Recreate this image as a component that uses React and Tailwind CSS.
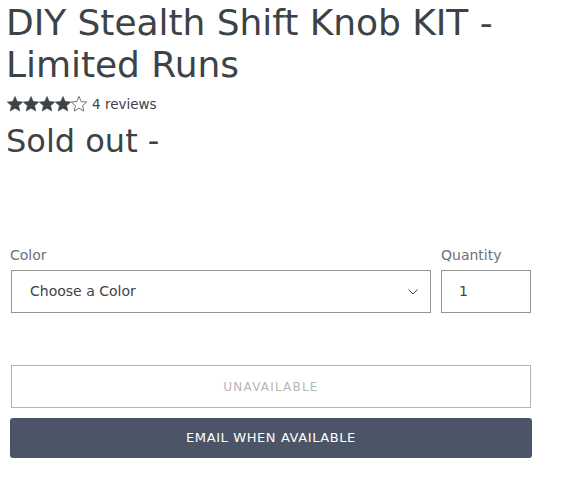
import React from 'react'

// single star glyph, filled or outline
function Star({ filled }) {
  return (
    <svg width="16" height="16" viewBox="1.2 1.2 21.6 21.6" className="shrink-0">
      <path
        d="M12 1.8l3 6.9 7.4.6-5.6 4.9 1.7 7.3L12 17.6l-6.5 3.9 1.7-7.3-5.6-4.9 7.4-.6z"
        fill={filled ? '#3d4246' : 'none'}
        stroke="#3d4246"
        strokeWidth={filled ? 0.8 : 1}
        strokeLinejoin="round"
      />
    </svg>
  )
}

export default function App() {
  const font = { fontFamily: '"DejaVu Sans", "Open Sans", sans-serif' }

  return (
    <div className="w-[561px] h-[478px] bg-white text-[#3d4246] overflow-hidden" style={font}>
      <div className="pl-[6px] pt-[2px]">
        <h1 className="text-[36px] leading-[42px] font-normal tracking-[-0.05px]">
          DIY Stealth Shift Knob KIT - Limited Runs
        </h1>

        {/* rating row */}
        <div className="flex items-center mt-[10px] h-[16px] pl-[1px]">
          <Star filled />
          <Star filled />
          <Star filled />
          <Star filled />
          <Star />
          <span className="ml-[5px] text-[13.5px] leading-[16px] text-[#3d4246]">4 reviews</span>
        </div>

        <div className="text-[32px] leading-[38px] mt-[10px]">Sold out -</div>
      </div>

      <div className="ml-[11px] w-[520px] mt-[85px]">
        <div className="flex gap-[10px]">
          <div className="flex flex-col w-[420px]">
            <label className="text-[14px] leading-[20px] text-[#69727b] mb-[5px] -ml-[1px]">Color</label>
            <div className="h-[43px] border border-[#949494] flex items-center justify-between pl-[18px] pr-[12px]">
              <span className="text-[14px] text-[#3d4246]">Choose a Color</span>
              <svg width="10" height="6" viewBox="0 0 10 6" fill="none" stroke="#3d4246" strokeWidth="1">
                <path d="M0.5 0.5l4.5 4.5 4.5-4.5" />
              </svg>
            </div>
          </div>
          <div className="flex flex-col w-[90px]">
            <label className="text-[14px] leading-[20px] text-[#69727b] mb-[5px]">Quantity</label>
            <div className="h-[43px] border border-[#949494] flex items-center pl-[17px]">
              <span className="text-[14px] text-[#3d4246]">1</span>
            </div>
          </div>
        </div>

        <div className="mt-[52px] h-[43px] border border-[#b3b3b3] flex items-center justify-center text-[12px] tracking-[1.2px] text-[#b6b6b6]">
          UNAVAILABLE
        </div>

        <div className="mt-[10px] -mx-[1px] h-[40px] rounded-[3px] bg-[#4b5567] flex items-center justify-center text-[13px] tracking-[0.6px] font-medium text-white">
          EMAIL WHEN AVAILABLE
        </div>
      </div>
    </div>
  )
}
